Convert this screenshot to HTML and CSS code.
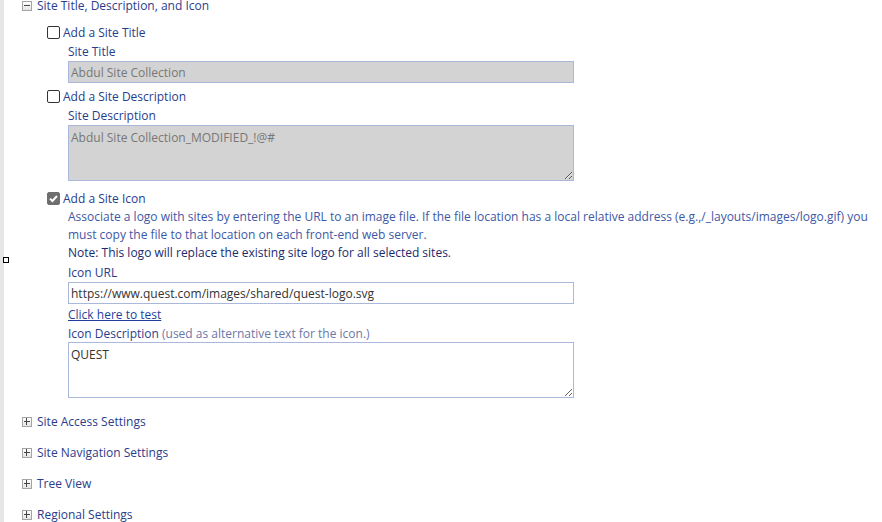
FILE: index.html
```html
<!DOCTYPE html>
<html lang="en">
<head>
    <meta charset="UTF-8">
    <title>Site Settings</title>
    <link rel="stylesheet" href="styles.css">
</head>
<body>
    <div class="page">
        <!-- expanded section -->
        <div class="section-head">
            <span class="toggle"><span class="bar"></span></span>
            <span>Site Title, Description, and Icon</span>
        </div>

        <div class="group">
            <div class="check-row">
                <span class="cb"></span>
                <span>Add a Site Title</span>
            </div>
            <div class="field">
                <div class="label">Site Title</div>
                <input class="text-input" type="text" value="Abdul Site Collection" disabled>
            </div>

            <div class="check-row gap">
                <span class="cb"></span>
                <span>Add a Site Description</span>
            </div>
            <div class="field">
                <div class="label">Site Description</div>
                <textarea class="text-area" disabled>Abdul Site Collection_MODIFIED_!@#</textarea>
            </div>

            <div class="check-row wide-gap">
                <span class="cb checked">
                    <svg width="11" height="11" viewBox="0 0 11 11"><path d="M2 5.6 L4.4 8 L9 3" fill="none" stroke="#fff" stroke-width="2"/></svg>
                </span>
                <span>Add a Site Icon</span>
            </div>
            <div class="field">
                <p class="desc">Associate a logo with sites by entering the URL to an image file. If the file location has a local relative address (e.g.,/_layouts/images/logo.gif) you<br>must copy the file to that location on each front-end web server.</p>
                <p class="note">Note: This logo will replace the existing site logo for all selected sites.</p>
                <div class="label spaced">Icon URL</div>
                <input class="text-input" type="text" value="https://www.quest.com/images/shared/quest-logo.svg">
                <a class="test-link" href="#">Click here to test</a>
                <div class="label after-link">Icon Description <span class="hint">(used as alternative text for the icon.)</span></div>
                <textarea class="text-area">QUEST</textarea>
            </div>
        </div>

        <!-- collapsed sections -->
        <div class="section-head first-closed">
            <span class="toggle"><span class="bar"></span><span class="bar vert"></span></span>
            <span>Site Access Settings</span>
        </div>
        <div class="section-head closed">
            <span class="toggle"><span class="bar"></span><span class="bar vert"></span></span>
            <span>Site Navigation Settings</span>
        </div>
        <div class="section-head closed">
            <span class="toggle"><span class="bar"></span><span class="bar vert"></span></span>
            <span>Tree View</span>
        </div>
        <div class="section-head closed">
            <span class="toggle"><span class="bar"></span><span class="bar vert"></span></span>
            <span>Regional Settings</span>
        </div>
    </div>

    <span class="handle"></span>
</body>
</html>
```

FILE: styles.css
```css
* {
    box-sizing: border-box;
}

html, body {
    height: 100%;
}

body {
    margin: 0;
    background: #fff;
    border-left: 4px solid #e6e6e6;
    font-family: 'Open Sans', sans-serif;
    font-size: 12px;
    color: #2a3c8c;
    overflow: hidden;
}

.page {
    margin-top: -3px;
    padding-left: 18px;
}

.section-head {
    display: flex;
    align-items: center;
    gap: 5px;
    height: 18px;
    line-height: 18px;
    white-space: nowrap;
}

.first-closed {
    margin-top: 15px;
}

.closed {
    margin-top: 13px;
}

.toggle {
    position: relative;
    width: 10px;
    height: 10px;
    border: 1px solid #a4a4a4;
    background: linear-gradient(#fff, #e4e4e4);
    flex: none;
}

.toggle .bar {
    position: absolute;
    left: 1px;
    top: 3px;
    width: 6px;
    height: 1px;
    background: #444;
}

.toggle .bar.vert {
    left: 3px;
    top: 0;
    width: 1px;
    height: 7px;
}

.group {
    padding-left: 25px;
    margin-top: 7px;
}

.check-row {
    display: flex;
    align-items: center;
    gap: 3px;
    height: 20px;
    white-space: nowrap;
}

.check-row.gap {
    margin-top: 3px;
}

.check-row.wide-gap {
    margin-top: 7px;
}

.cb {
    display: flex;
    align-items: center;
    justify-content: center;
    width: 13px;
    height: 13px;
    border: 1px solid #333;
    border-radius: 2px;
    background: #fff;
    flex: none;
}

.cb.checked {
    background: #6e6e6e;
    border-color: #6e6e6e;
}

.field {
    padding-left: 21px;
}

.label {
    margin-top: 1px;
    height: 18px;
    line-height: 18px;
    white-space: nowrap;
}

.label.spaced {
    margin-top: 2px;
}

.label.after-link {
    margin-top: 2px;
    height: 16px;
    line-height: 16px;
}

.hint {
    color: #6b78a8;
}

.text-input, .text-area {
    display: block;
    width: 506px;
    border: 1px solid #aab8db;
    font-family: 'Open Sans', sans-serif;
    font-size: 12px;
    color: #333;
    padding: 0 2px;
    background: #fff;
}

.text-input {
    height: 22px;
}

.text-area {
    height: 56px;
    padding-top: 3px;
    resize: both;
}

.text-input:disabled, .text-area:disabled {
    background: #d3d3d3;
    color: #777;
}

.desc, .note {
    margin: 0;
    line-height: 18px;
    white-space: nowrap;
}

.desc {
    color: #3d58a6;
}

.note {
    color: #1c2a6c;
}

.test-link {
    display: block;
    width: max-content;
    margin-top: 2px;
    height: 18px;
    line-height: 18px;
    color: #1f3f9c;
    text-decoration: underline;
}

.handle {
    position: absolute;
    left: 3px;
    top: 257px;
    width: 6px;
    height: 6px;
    border: 1px solid #000;
    background: #fff;
}
```
